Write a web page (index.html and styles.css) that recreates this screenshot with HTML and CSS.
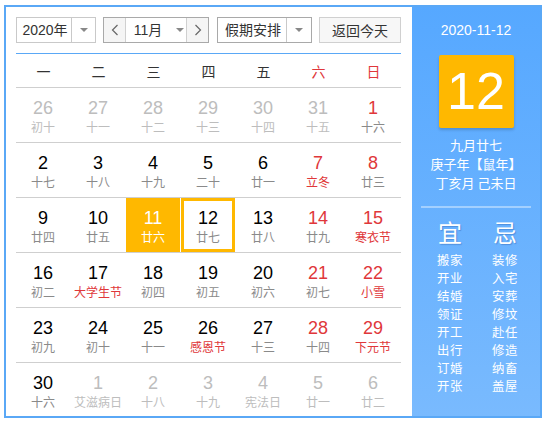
FILE: index.html
```html
<!DOCTYPE html>
<html lang="zh-CN">
<head>
<meta charset="utf-8">
<title>万年历</title>
<link rel="stylesheet" href="styles.css">
</head>
<body>
<div class="cal">
  <div class="main">
    <div class="toolbar">
      <div class="sel sel-year">
        <span class="sel-text">2020年</span>
        <span class="sel-arrow"><i class="tri"></i></span>
      </div>
      <div class="sel sel-month">
        <span class="nav"><svg width="8" height="12" viewBox="0 0 8 12"><path d="M6.5 1 L1.5 6 L6.5 11" fill="none" stroke="#666" stroke-width="1.2"/></svg></span>
        <span class="month-text">11月<i class="tri"></i></span>
        <span class="nav"><svg width="8" height="12" viewBox="0 0 8 12"><path d="M1.5 1 L6.5 6 L1.5 11" fill="none" stroke="#666" stroke-width="1.2"/></svg></span>
      </div>
      <div class="sel sel-holiday">
        <span class="sel-text">假期安排</span>
        <span class="sel-arrow"><i class="tri"></i></span>
      </div>
      <div class="btn-today">返回今天</div>
    </div>
    <div class="week">
      <span>一</span><span>二</span><span>三</span><span>四</span><span>五</span><span class="red">六</span><span class="red">日</span>
    </div>
    <div class="days">
      <div class="row">
        <div class="cell other"><b>26</b><em>初十</em></div>
        <div class="cell other"><b>27</b><em>十一</em></div>
        <div class="cell other"><b>28</b><em>十二</em></div>
        <div class="cell other"><b>29</b><em>十三</em></div>
        <div class="cell other"><b>30</b><em>十四</em></div>
        <div class="cell other"><b>31</b><em>十五</em></div>
        <div class="cell wk"><b>1</b><em>十六</em></div>
      </div>
      <div class="row">
        <div class="cell"><b>2</b><em>十七</em></div>
        <div class="cell"><b>3</b><em>十八</em></div>
        <div class="cell"><b>4</b><em>十九</em></div>
        <div class="cell"><b>5</b><em>二十</em></div>
        <div class="cell"><b>6</b><em>廿一</em></div>
        <div class="cell wk"><b>7</b><em class="fest">立冬</em></div>
        <div class="cell wk"><b>8</b><em>廿三</em></div>
      </div>
      <div class="row">
        <div class="cell"><b>9</b><em>廿四</em></div>
        <div class="cell"><b>10</b><em>廿五</em></div>
        <div class="cell today"><b>11</b><em>廿六</em></div>
        <div class="cell selected"><b>12</b><em>廿七</em></div>
        <div class="cell"><b>13</b><em>廿八</em></div>
        <div class="cell wk"><b>14</b><em>廿九</em></div>
        <div class="cell wk"><b>15</b><em class="fest">寒衣节</em></div>
      </div>
      <div class="row">
        <div class="cell"><b>16</b><em>初二</em></div>
        <div class="cell"><b>17</b><em class="fest">大学生节</em></div>
        <div class="cell"><b>18</b><em>初四</em></div>
        <div class="cell"><b>19</b><em>初五</em></div>
        <div class="cell"><b>20</b><em>初六</em></div>
        <div class="cell wk"><b>21</b><em>初七</em></div>
        <div class="cell wk"><b>22</b><em class="fest">小雪</em></div>
      </div>
      <div class="row">
        <div class="cell"><b>23</b><em>初九</em></div>
        <div class="cell"><b>24</b><em>初十</em></div>
        <div class="cell"><b>25</b><em>十一</em></div>
        <div class="cell"><b>26</b><em class="fest">感恩节</em></div>
        <div class="cell"><b>27</b><em>十三</em></div>
        <div class="cell wk"><b>28</b><em>十四</em></div>
        <div class="cell wk"><b>29</b><em class="fest">下元节</em></div>
      </div>
      <div class="row">
        <div class="cell"><b>30</b><em>十六</em></div>
        <div class="cell other"><b>1</b><em>艾滋病日</em></div>
        <div class="cell other"><b>2</b><em>十八</em></div>
        <div class="cell other"><b>3</b><em>十九</em></div>
        <div class="cell other"><b>4</b><em>宪法日</em></div>
        <div class="cell other"><b>5</b><em>廿一</em></div>
        <div class="cell other"><b>6</b><em>廿二</em></div>
      </div>
    </div>
  </div>
  <div class="side">
    <div class="side-date">2020-11-12</div>
    <div class="big-day">12</div>
    <div class="lunar">
      <div>九月廿七</div>
      <div>庚子年【鼠年】</div>
      <div>丁亥月 己未日</div>
    </div>
    <div class="sep"></div>
    <div class="yiji">
      <div class="col">
        <div class="yj-title">宜</div>
        <div>搬家</div><div>开业</div><div>结婚</div><div>领证</div><div>开工</div><div>出行</div><div>订婚</div><div>开张</div>
      </div>
      <div class="col">
        <div class="yj-title">忌</div>
        <div>装修</div><div>入宅</div><div>安葬</div><div>修坟</div><div>赴任</div><div>修造</div><div>纳畜</div><div>盖屋</div>
      </div>
    </div>
  </div>
</div>
</body>
</html>
```
FILE: styles.css
```css
* { box-sizing: border-box; }
html, body { margin: 0; padding: 0; background: #fff; }
body {
  font-family: "Liberation Sans", "Noto Sans CJK SC", sans-serif;
  color: #333;
}
.cal {
  margin: 5px 0 0 4px;
  width: 538px;
  height: 413px;
  border: 2px solid #5aa8f6;
  display: flex;
  overflow: hidden;
}
.main {
  width: 406px;
  padding: 10px 11px 0 10px;
  background: #fff;
}
.toolbar {
  display: flex;
  height: 26px;
  font-size: 14px;
  color: #333;
}
.sel {
  display: flex;
  height: 26px;
  border: 1px solid #c9c9c9;
  background: #fff;
}
.sel-year { width: 80px; }
.sel-month { width: 106px; margin-left: 7px; border-color: #a9a9a9; }
.sel-holiday { width: 95px; margin-left: 8px; border-color: #a9a9a9; }
.sel-text {
  flex: 1;
  display: flex;
  align-items: center;
  justify-content: center;
  line-height: 24px;
}
.sel-year .sel-text { padding-left: 2px; }
.sel-holiday .sel-text { padding-left: 2px; }
.sel-arrow {
  width: 24px;
  border-left: 1px solid #c9c9c9;
  display: flex;
  align-items: center;
  justify-content: center;
}
.sel-holiday .sel-arrow { width: 25px; }
.tri {
  display: inline-block;
  width: 0;
  height: 0;
  border-left: 4px solid transparent;
  border-right: 4px solid transparent;
  border-top: 4px solid #888;
}
.nav {
  width: 22px;
  background: #f5f5f5;
  display: flex;
  align-items: center;
  justify-content: center;
}
.nav:first-child { border-right: 1px solid #d0d0d0; }
.nav:last-child { border-left: 1px solid #d0d0d0; }
.month-text {
  flex: 1;
  display: flex;
  align-items: center;
  justify-content: center;
  gap: 14px;
  padding-left: 6px;
  line-height: 24px;
}
.btn-today {
  margin-left: 7px;
  width: 82px;
  height: 26px;
  border: 1px solid #d0d0d0;
  background: #f7f7f7;
  display: flex;
  align-items: center;
  justify-content: center;
  font-size: 14px;
  color: #333;
}
.week {
  margin-top: 10px;
  border-top: 1px solid #5aa8f6;
  height: 34px;
  display: grid;
  grid-template-columns: repeat(7, 55px);
  font-size: 14px;
  color: #333;
  align-items: center;
  text-align: center;
  font-family: "Noto Sans CJK SC", sans-serif;
}
.week span { line-height: 32px; }
.week .red { color: #e0373a; }
.row {
  display: grid;
  grid-template-columns: repeat(7, 55px);
  height: 55px;
  border-top: 1px solid #cfcfcf;
}
.cell {
  width: 54px;
  height: 54px;
  text-align: center;
  padding-top: 10px;
}
.cell b {
  display: block;
  font-weight: normal;
  font-size: 18px;
  line-height: 20px;
  color: #000;
}
.cell em {
  display: block;
  font-style: normal;
  font-size: 12px;
  line-height: 18px;
  color: #8a8a8a;
  font-family: "Noto Sans CJK SC", sans-serif;
}
.cell.wk b { color: #e0373a; }
.cell em.fest { color: #e0373a; }
.cell.other b, .cell.other em { color: #bdbdbd; }
.cell.today { background: #ffb800; }
.cell.today b, .cell.today em { color: #fff; }
.cell.selected {
  border: 3px solid #ffb800;
  padding-top: 7px;
}
.side {
  width: 128px;
  background: linear-gradient(#56a8ff, #79bafe);
  color: #fff;
  display: flex;
  flex-direction: column;
  align-items: center;
  padding-top: 13px;
  font-family: "Noto Sans CJK SC", sans-serif;
}
.side-date {
  font-family: "Liberation Sans", sans-serif;
  font-size: 14px;
  line-height: 20px;
}
.big-day {
  margin-top: 15px;
  width: 75px;
  height: 73px;
  background: #ffb800;
  border-radius: 2px;
  box-shadow: 0 2px 3px rgba(0, 0, 0, 0.18);
  font-family: "Liberation Sans", sans-serif;
  font-size: 52px;
  line-height: 73px;
  text-align: center;
  color: #fff;
}
.lunar {
  margin-top: 7px;
  font-size: 13px;
  line-height: 19px;
  text-align: center;
}
.sep {
  margin-top: 14px;
  width: 110px;
  height: 2px;
  background: #a3d0ff;
}
.yiji {
  margin-top: 9px;
  display: grid;
  grid-template-columns: 55px 55px;
  padding-left: 3px;
  font-size: 12.4px;
  line-height: 18px;
  letter-spacing: 0.5px;
  text-align: center;
}
.yj-title {
  font-size: 24px;
  line-height: 30px;
  margin-bottom: 4px;
  letter-spacing: 0;
  text-shadow: 1px 1px 1px rgba(0, 40, 120, 0.25);
}
```
